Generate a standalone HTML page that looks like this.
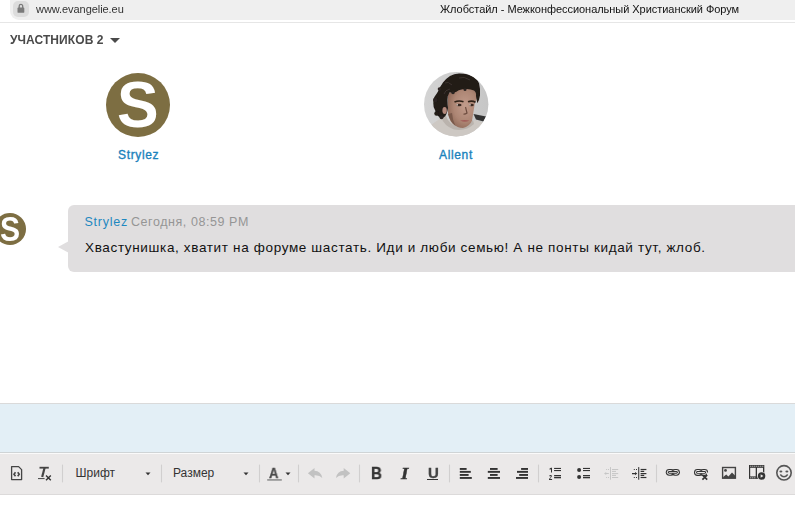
<!DOCTYPE html>
<html><head><meta charset="utf-8">
<style>
*{margin:0;padding:0;box-sizing:border-box}
html,body{width:795px;height:509px;overflow:hidden;background:#fff;font-family:"Liberation Sans",sans-serif;position:relative}
.abs{position:absolute}
#urlbar{left:10px;top:-12px;width:800px;height:32px;background:#efefef;border-radius:9px}
#lockbox{left:13px;top:1px;width:16px;height:16px;background:#dcdcdc;border-radius:5px}
#url{left:36px;top:3px;font-size:11px;color:#333;letter-spacing:-0.06px;white-space:nowrap;will-change:transform}
#title{left:440px;top:3.2px;font-size:11px;color:#111;letter-spacing:-0.04px;white-space:nowrap;will-change:transform}
#sep{left:0;top:22px;width:795px;height:1px;background:#e6e6e6}
#hdr{left:10.3px;top:33px;font-size:12px;font-weight:bold;color:#4a4a4a;white-space:nowrap;letter-spacing:0.08px;will-change:transform}
#tri{left:110px;top:38px;width:0;height:0;border-left:5px solid transparent;border-right:5px solid transparent;border-top:5.5px solid #4a4a4a}
.av{border-radius:50%;overflow:hidden}
.name{font-size:12px;font-weight:normal;color:#1a82bc;white-space:nowrap;letter-spacing:0.65px;-webkit-text-stroke:0.35px #1a82bc}
.bigS{left:11.3px;top:-0.4px;font-size:65px;font-weight:bold;color:#fff;line-height:1;transform:scaleX(0.96);transform-origin:0 0}
.smS{left:5.8px;top:-1.7px;font-size:35px;font-weight:bold;color:#fff;line-height:1;transform:scaleX(0.86);transform-origin:0 0}
#bubble{left:68px;top:205px;width:740px;height:67px;background:#e0dedf;border-radius:6px}
#tail{left:58px;top:240.5px;width:0;height:0;border-top:6.5px solid transparent;border-bottom:6.5px solid transparent;border-right:11px solid #e0dedf}
#bname{left:84.5px;top:214.5px;font-size:12.5px;color:#1e88c0;white-space:nowrap;letter-spacing:0.75px}
#btime{left:131px;top:214.5px;font-size:12.5px;color:#959595;white-space:nowrap;letter-spacing:0.56px}
#msg{left:85px;top:240px;font-size:13.5px;color:#111;white-space:nowrap;letter-spacing:0.65px}
#editor{left:0;top:403px;width:795px;height:50px;background:#e3eff6;border-top:1px solid #dadada;border-bottom:1px solid #cfd4d6}
#tbwhite{left:0;top:453px;width:795px;height:1px;background:#fafafa}
#toolbar{left:0;top:454px;width:795px;height:41px;background:#ebe9e9;border-bottom:1px solid #dcdada}
.tbt{font-size:12px;color:#333;white-space:nowrap}
</style></head><body>
<div id="urlbar" class="abs"></div>
<div id="lockbox" class="abs"></div>
<svg class="abs" style="left:0;top:0" width="40" height="22" viewBox="0 0 40 22">
 <path d="M19.2 8 V6.1 A1.75 1.75 0 0 1 22.7 6.1 V8" fill="none" stroke="#7a7a7a" stroke-width="1.3"/>
 <rect x="17.5" y="7.6" width="6.8" height="5.2" rx="0.9" fill="#7a7a7a"/>
</svg>
<div id="url" class="abs">www.evangelie.eu</div>
<div id="title" class="abs">Жлобстайл - Межконфессиональный Христианский Форум</div>
<div id="sep" class="abs"></div>
<div id="hdr" class="abs">УЧАСТНИКОВ 2</div>
<div id="tri" class="abs"></div>

<div class="abs av" style="left:105.5px;top:72.5px;width:64px;height:64px;background:#7d6e42"><div class="abs bigS">S</div></div>
<div class="abs name" style="left:118px;top:148px">Strylez</div>

<svg class="abs" style="left:422px;top:70px" width="68" height="68" viewBox="0 0 68 68">
 <defs>
  <clipPath id="cp"><circle cx="34.2" cy="34.2" r="32.2"/></clipPath>
  <filter id="bl" x="-10%" y="-10%" width="120%" height="120%"><feGaussianBlur stdDeviation="0.7"/></filter>
  <linearGradient id="bgg" x1="0" y1="0" x2="1" y2="0"><stop offset="0" stop-color="#d4d4d4"/><stop offset="1" stop-color="#c6c6c6"/></linearGradient>
  <radialGradient id="skin" cx="0.6" cy="0.45" r="0.65">
   <stop offset="0" stop-color="#c29c8c"/><stop offset="0.6" stop-color="#ad8674"/><stop offset="1" stop-color="#8c6656"/>
  </radialGradient>
 </defs>
 <g clip-path="url(#cp)">
  <rect width="68" height="68" fill="url(#bgg)"/>
  <g filter="url(#bl)">
      <path d="M2 60 Q10 54 19 48 L28 50 Q38 57 48 53 L53 50 Q62 52 68 57 L68 70 L0 70 Z" fill="#cdc8c3"/>
   <path d="M51.5 44 L64 46.5 L61.5 51.5 L54 49.5 Z" fill="#333"/>
   <path d="M19 47 Q22 56 32 59.5 Q44 61.5 52 54 L51 50 Q44 57.5 36 57 Q27 54.5 24 46 Z" fill="#bab3ad"/>
   <path d="M25.5 38 Q26 49 30.5 53.5 Q35.5 58 41 58 Q47.5 56.5 50 50.7 L51.3 42.7 L52.7 34 L55 28 L54 19 Q46 17 38 19.5 Q30 21 26 24 Z" fill="url(#skin)"/>
   <path d="M26 44 Q28.5 52 33.5 56 Q30.5 50 30 43 Z" fill="#7a5a4c"/>
   <path d="M11.3 33.3 Q11.5 28 12.5 26.7 Q14.5 24 16 21.5 Q18 16.5 21 12.5 Q24 8.5 28 6 Q32 3.8 37 3.6 Q45 3.5 52 7 Q56 10 57 13.3 Q58.5 19 58 25.3 Q57.5 30 55.3 33.3 Q54.5 29 54 26 Q54.5 22 52 20.5 Q47.3 18.2 40.7 19.3 Q36 20 34 22 Q30 22.5 27.5 22.5 Q25.5 25 25.5 30 Q25.5 35 26 38 Q25 44 23 46.5 Q20.5 48.5 17.5 47 Q14 45 13.3 40.7 Q11 37 11.3 33.3 Z" fill="#201a17"/>
   <circle cx="14.5" cy="43.5" r="2.2" fill="#201a17"/>
   <circle cx="19.5" cy="47.2" r="2" fill="#2a2420"/>
   <circle cx="13.2" cy="30" r="2.2" fill="#2a2420"/><circle cx="17.5" cy="19" r="1.8" fill="#2a2420"/>
   <circle cx="31" cy="22.5" r="1.8" fill="#2a2420"/>
   <circle cx="43" cy="19.6" r="1.5" fill="#2a2420"/>
   <ellipse cx="22.6" cy="40.5" rx="2.2" ry="3.4" fill="#b3897c"/>
   <path d="M23 13 Q26 11 30 15 M37 8 Q42 6 48 10 M22 24 Q23 20 28 19" stroke="#3c342e" stroke-width="1" fill="none"/>
   <path d="M32.5 32 Q37 30 41.5 31.8" stroke="#2e2019" stroke-width="1.6" fill="none"/>
   <path d="M46 31.8 Q50 30.2 53.5 32.2" stroke="#2e2019" stroke-width="1.6" fill="none"/>
   <ellipse cx="37" cy="35" rx="2.6" ry="1.3" fill="#3a2a24"/>
   <ellipse cx="49.5" cy="35" rx="2.3" ry="1.3" fill="#3a2a24"/>
   <circle cx="35.2" cy="34.9" r="0.8" fill="#e0d4cc"/>
   <circle cx="48" cy="34.9" r="0.8" fill="#e0d4cc"/>
   <path d="M43.5 37 Q44.5 41 45 43 Q43.5 44.4 41.5 44.2" stroke="#6e4e40" stroke-width="1.2" fill="none"/>
   <path d="M46.5 38 Q48 41 47.5 43.5" stroke="#ba927e" stroke-width="1.2" fill="none"/>
   <path d="M38 50.6 Q42.5 49.2 47.5 50.6 Q43 53 38 50.6 Z" fill="#a05c58"/>
  </g>
 </g>
</svg>
<div class="abs name" style="left:439px;top:148px">Allent</div>

<div class="abs av" style="left:-6px;top:213px;width:32px;height:32px;background:#7d6e42"><div class="abs smS">S</div></div>
<div id="bubble" class="abs"></div>
<div id="tail" class="abs"></div>
<div id="bname" class="abs">Strylez</div>
<div id="btime" class="abs">Сегодня, 08:59 PM</div>
<div id="msg" class="abs">Хвастунишка, хватит на форуме шастать. Иди и люби семью! А не понты кидай тут, жлоб.</div>

<div id="editor" class="abs"></div>
<div id="tbwhite" class="abs"></div>
<div id="toolbar" class="abs"></div>
<svg class="abs" style="left:0;top:454px" width="795" height="41" viewBox="0 454 795 41">
 <g fill="none" stroke="#d1cfcf" stroke-width="1.1">
  <line x1="62.5" y1="464.6" x2="62.5" y2="482.4"/>
  <line x1="161.5" y1="464.6" x2="161.5" y2="482.4"/>
  <line x1="259.5" y1="464.6" x2="259.5" y2="482.4"/>
  <line x1="298.5" y1="464.6" x2="298.5" y2="482.4"/>
  <line x1="359.5" y1="464.6" x2="359.5" y2="482.4"/>
  <line x1="449.5" y1="464.6" x2="449.5" y2="482.4"/>
  <line x1="538.5" y1="464.6" x2="538.5" y2="482.4"/>
  <line x1="656.5" y1="464.6" x2="656.5" y2="482.4"/>
 </g>
 <!-- source doc -->
 <path d="M11.6 466.6 H18.6 L21.6 469.6 V479.6 H11.6 Z" fill="none" stroke="#444" stroke-width="1.3" stroke-linejoin="round"/>
 <path d="M15.5 472.3 L14 474.3 L15.5 476.3 M17.7 472.3 L19.2 474.3 L17.7 476.3" fill="none" stroke="#444" stroke-width="1.6"/>
 <!-- Tx -->
 <path d="M39.5 467.7 H48.8" stroke="#444" stroke-width="1.8"/>
 <path d="M44.6 467.7 L42.2 477" stroke="#444" stroke-width="2.2"/>
 <path d="M38 478.6 H44.6" stroke="#444" stroke-width="1"/>
 <path d="M46 475.5 L50.8 480.2 M50.8 475.5 L46 480.2" stroke="#333" stroke-width="1.4"/>
 <!-- dropdown triangles -->
 <path d="M145.5 472.5 H150.5 L148 475.3 Z" fill="#333"/>
 <path d="M243.5 472.5 H248.5 L246 475.3 Z" fill="#333"/>
 <path d="M285.5 472.5 H290.5 L288 475.3 Z" fill="#333"/>
 <!-- font color underline -->
 <rect x="267.2" y="479" width="14.6" height="1.8" fill="#9a9a9a"/>
 <!-- undo/redo -->
 <path d="M307.9 473.2 L314.5 467.9 V470.8 Q321 471 322.3 478 Q319.5 474.9 314.5 475.3 V478.4 Z" fill="#c2c2c2"/>
 <path d="M350.3 473.2 L343.7 467.9 V470.8 Q337.2 471 335.9 478 Q338.7 474.9 343.7 475.3 V478.4 Z" fill="#c2c2c2"/>
 <!-- align icons -->
 <g fill="#333">
  <rect x="459.8" y="468" width="6.8" height="1.9"/><rect x="459.8" y="470.9" width="11" height="1.9"/><rect x="459.8" y="474" width="8.8" height="1.9"/><rect x="459.8" y="477" width="12" height="1.9"/>
  <rect x="490" y="468" width="7.6" height="1.9"/><rect x="487.8" y="470.9" width="12.2" height="1.9"/><rect x="490" y="474" width="7.6" height="1.9"/><rect x="487.8" y="477" width="12.2" height="1.9"/>
  <rect x="521.1" y="468" width="6.9" height="1.9"/><rect x="517" y="470.9" width="11" height="1.9"/><rect x="519.2" y="474" width="8.8" height="1.9"/><rect x="516" y="477" width="12" height="1.9"/>
 </g>
 <!-- numbered list -->
 <g fill="#333">
  <path d="M549.6 468.6 L551 467.8 H552 V472.5 H551 V469.2 L549.6 469.8 Z"/>
  <path d="M549.2 475.9 Q549.3 474.9 550.6 474.9 Q551.9 475 551.9 476.1 Q551.8 477 550.4 478.2 L550.2 478.9 H552.1 V480 H549 V478.9 L550.8 477.1 Q551 476.6 550.7 476.2 Q550.1 475.9 550.1 476.5 Z"/>
  <rect x="554.1" y="467.9" width="6.9" height="1.1"/><rect x="554.1" y="470" width="6.9" height="1.1"/>
  <rect x="554.1" y="475" width="6.9" height="1.3"/><rect x="554.1" y="477" width="6.9" height="1.3"/>
 </g>
 <!-- bullet list -->
 <g fill="#333">
  <circle cx="579.1" cy="470" r="2"/><circle cx="579.1" cy="476.9" r="2"/>
  <rect x="583" y="467.9" width="7" height="1.1"/><rect x="583" y="470" width="7" height="1.1"/>
  <rect x="583" y="475" width="7" height="1.3"/><rect x="583" y="477" width="7" height="1.3"/>
 </g>
 <!-- outdent (disabled) -->
 <g fill="#c6c6c6">
  <rect x="606.1" y="469" width="1" height="1"/><rect x="608" y="469" width="1" height="1"/>
  <rect x="606.1" y="477" width="1" height="1"/><rect x="608" y="477" width="1" height="1"/>
  <path d="M604 473.6 L606.2 472.1 V473.1 H608.8 V474.1 H606.2 V475.1 Z"/>
  <rect x="610" y="467.1" width="1" height="12.6"/>
  <rect x="612" y="469" width="6.2" height="1"/><rect x="612" y="470.9" width="4" height="1"/><rect x="612" y="473.1" width="6.2" height="1"/><rect x="612" y="474.9" width="4" height="1"/><rect x="612" y="477" width="6.2" height="1"/>
 </g>
 <!-- indent -->
 <g fill="#333">
  <rect x="633.8" y="469" width="1" height="1"/><rect x="636" y="469" width="1" height="1"/>
  <rect x="633.8" y="477" width="1" height="1"/><rect x="636" y="477" width="1" height="1"/>
  <path d="M637.3 473.6 L635 472 V473 H632 V474.2 H635 V475.2 Z"/>
  <rect x="638" y="467.1" width="1.3" height="12.6" fill="#555"/>
  <rect x="640.6" y="468.9" width="5.8" height="1.2"/><rect x="640.6" y="470.8" width="3.6" height="1.2"/><rect x="640.6" y="473" width="5.8" height="1.2"/><rect x="640.6" y="474.8" width="3.6" height="1.2"/><rect x="640.6" y="476.9" width="5.8" height="1.2"/>
 </g>
 <!-- link -->
 <defs>
  <g id="chain">
   <rect x="0" y="0" width="8.7" height="6.9" rx="3.45" fill="#333"/>
   <rect x="5.7" y="0" width="8.4" height="6.9" rx="3.45" fill="#333"/>
   <rect x="1.1" y="1.1" width="5.9" height="4.7" rx="2.35" fill="#ebe9e9"/>
   <rect x="7.2" y="1.1" width="5.8" height="4.7" rx="2.35" fill="#ebe9e9"/>
   <rect x="2.1" y="2.1" width="9.9" height="2.7" rx="1.35" fill="#333"/>
   <rect x="3" y="3" width="8.1" height="0.9" rx="0.45" fill="#ebe9e9"/>
  </g>
  <clipPath id="ulc"><path d="M693 466 H710 V472.6 H707 V477 H693 Z"/></clipPath>
 </defs>
 <use href="#chain" x="665.8" y="468.9"/>
 <g clip-path="url(#ulc)"><use href="#chain" x="694" y="469"/></g>
 <path d="M702.4 475 L707.2 479.6 M707.2 475 L702.4 479.6" stroke="#333" stroke-width="1.7"/>
 <!-- image -->
 <rect x="722.6" y="467.5" width="12.8" height="10.7" fill="none" stroke="#444" stroke-width="1.4"/>
 <circle cx="725.5" cy="470.4" r="1.4" fill="#444"/>
 <path d="M723.2 478.3 V477 L726.2 474.4 L728.4 476.4 L732 472.4 L735 475.4 V478.3 Z" fill="#444"/>
 <!-- video -->
 <rect x="749" y="465" width="15.3" height="13.9" fill="#333"/>
 <rect x="750.2" y="467.8" width="5.5" height="8.6" fill="#ebe9e9"/>
 <rect x="757" y="467.8" width="6" height="8.6" fill="#ebe9e9"/>
 <g fill="#ebe9e9">
  <rect x="750.3" y="465.7" width="1" height="1"/><rect x="752.3" y="465.7" width="1" height="1"/><rect x="754.3" y="465.7" width="1" height="1"/><rect x="756.3" y="465.7" width="1" height="1"/><rect x="758.3" y="465.7" width="1" height="1"/><rect x="760.3" y="465.7" width="1" height="1"/><rect x="762.3" y="465.7" width="1" height="1"/>
  <rect x="750.3" y="477.3" width="1" height="1"/><rect x="752.3" y="477.3" width="1" height="1"/><rect x="754.3" y="477.3" width="1" height="1"/>
 </g>
 <circle cx="761.6" cy="476" r="4.5" fill="#ebe9e9"/>
 <circle cx="761.6" cy="476" r="3.7" fill="#333"/>
 <path d="M760.6 474.2 L763.4 476 L760.6 477.8 Z" fill="#ebe9e9"/>
 <!-- smiley -->
 <circle cx="784" cy="472.8" r="7.2" fill="none" stroke="#555" stroke-width="1.6"/>
 <ellipse cx="780.9" cy="471.5" rx="1.5" ry="0.95" fill="#555"/><ellipse cx="786.9" cy="471.5" rx="1.5" ry="0.95" fill="#555"/>
 <path d="M780.3 474.5 Q784 479 787.7 474.5" fill="none" stroke="#555" stroke-width="1.5"/>
</svg>
<div class="abs tbt" style="left:75.5px;top:466.4px">Шрифт</div>
<div class="abs tbt" style="left:173px;top:466.4px">Размер</div>
<div class="abs" style="left:269.3px;top:464.6px;font-size:14px;font-weight:bold;color:#4a4a4a;-webkit-text-stroke:0.3px #4a4a4a;will-change:transform;transform:scaleX(0.93);transform-origin:0 0">A</div>
<div class="abs" style="left:370.9px;top:465px;font-size:16px;font-weight:bold;color:#333;-webkit-text-stroke:0.35px #333;will-change:transform;transform:scaleX(0.94);transform-origin:0 0">B</div>
<div class="abs" style="left:400.5px;top:463.5px;font-size:16.5px;font-weight:bold;font-style:italic;font-family:'Liberation Serif',serif;color:#333;-webkit-text-stroke:0.4px #333;will-change:transform;transform:scaleX(1.15);transform-origin:0 0">I</div>
<div class="abs" style="left:427.5px;top:464px;font-size:15px;font-weight:bold;color:#444;-webkit-text-stroke:0.3px #444;will-change:transform">U</div>
<div class="abs" style="left:427px;top:478.5px;width:11px;height:1.5px;background:#333"></div>

</body></html>
